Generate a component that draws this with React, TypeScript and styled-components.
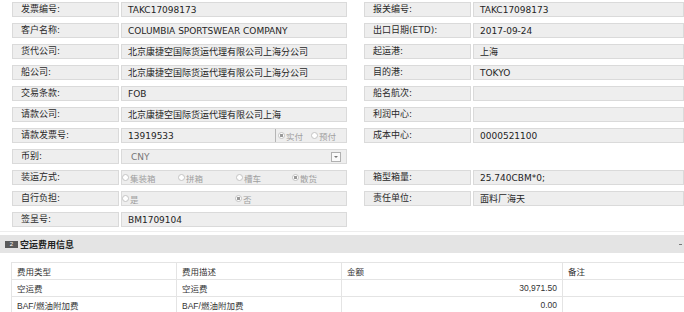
import styled, { createGlobalStyle } from 'styled-components';

const Global = createGlobalStyle`
    body {
        margin: 0;
        background: #fff;
        font-family: "DejaVu Sans", "Noto Sans CJK SC", sans-serif;
    }
`

const Page = styled.div`
    width: 684px;
    height: 312px;
    overflow: hidden;
`

const Form = styled.div`
    display: grid;
    grid-template-columns: 335px 1fr;
    column-gap: 17px;
    row-gap: 6px;
    padding: 2px 0 0 12px;
`

const Field = styled.div`
    display: flex;
    gap: 2px;
    height: 15px;
`

const Label = styled.div`
    flex: none;
    width: 107px;
    box-sizing: border-box;
    background: #eeeeee;
    border: 1px solid #dadada;
    padding-left: 8px;
    font-size: 9px;
    line-height: 13px;
    color: #2a2a2a;
    white-space: nowrap;
`

const Value = styled.div<{ $muted?: boolean }>`
    flex: 1;
    min-width: 0;
    box-sizing: border-box;
    display: flex;
    align-items: center;
    background: #eeeeee;
    border: 1px solid #dadada;
    padding-left: ${p => (p.$muted ? '9px' : '6px')};
    font-size: 9px;
    color: ${p => (p.$muted ? '#777' : '#1e1e1e')};
    white-space: nowrap;
    overflow: hidden;
`

const OptionsValue = styled(Value)`
    padding-left: 0;
`

const Text = styled.span`
    flex: 1;
`

const RadioGroup = styled.div`
    flex: none;
    display: flex;
    align-self: stretch;
    align-items: center;
    width: 68px;
    border-left: 1px solid #b5b5b5;
    padding-left: 2px;
`

const Radio = styled.span<{ $checked?: boolean; $w: number }>`
    display: inline-flex;
    align-items: center;
    gap: 1px;
    width: ${p => p.$w}px;
    flex: none;
    font-family: "Noto Sans CJK SC", sans-serif;
    font-size: 8.5px;
    color: #a0a0a0;
    &::before {
        content: '';
        width: 5px;
        height: 5px;
        border-radius: 50%;
        border: 1px solid #c4c4c4;
        background: ${p => (p.$checked ? 'radial-gradient(circle, #999 0 1.4px, #fff 1.9px)' : '#fff')};
    }
`

const Drop = styled.span`
    margin-left: auto;
    margin-right: 5px;
    width: 8px;
    height: 8px;
    border: 1px solid #b0b0b0;
    background: #fafafa;
    display: flex;
    align-items: center;
    justify-content: center;
    &::after {
        content: '';
        border-left: 2px solid transparent;
        border-right: 2px solid transparent;
        border-top: 2px solid #777;
    }
`

const Divider = styled.div`
    margin-top: 4px;
    height: 1px;
    background: #ededed;
`

const SectionBar = styled.div`
    margin-top: 3px;
    height: 18px;
    background: #e4e4e4;
    display: flex;
    align-items: center;
    padding-left: 5px;
    padding-right: 2px;
`

const Badge = styled.span`
    width: 13px;
    height: 7px;
    background: #5a5a5a;
    color: #fff;
    font-size: 6px;
    line-height: 7px;
    text-align: center;
    font-family: "Liberation Sans", sans-serif;
`

const SectionTitle = styled.span`
    flex: 1;
    margin-left: 2px;
    font-family: "Noto Sans CJK SC", sans-serif;
    font-weight: 700;
    font-size: 9px;
    color: #222;
`

const Collapse = styled.span`
    width: 3px;
    height: 1px;
    background: #777;
`

const Table = styled.table`
    margin: 9px 0 0 11px;
    width: 676px;
    border-collapse: collapse;
    table-layout: fixed;
    font-family: "Liberation Sans", "Noto Sans CJK SC", sans-serif;
    font-size: 8.5px;
    color: #333;
`

const Cell = styled.td<{ $right?: boolean }>`
    height: 16px;
    padding: 0 5px;
    border: 1px solid #e4e4e4;
    text-align: ${p => (p.$right ? 'right' : 'left')};
    white-space: nowrap;
`

type Row = [string, string] | null

const rows: [Row, Row][] = [
    [['发票编号:', 'TAKC17098173'], ['报关编号:', 'TAKC17098173']],
    [['客户名称:', 'COLUMBIA SPORTSWEAR COMPANY'], ['出口日期(ETD):', '2017-09-24']],
    [['货代公司:', '北京康捷空国际货运代理有限公司上海分公司'], ['起运港:', '上海']],
    [['船公司:', '北京康捷空国际货运代理有限公司上海分公司'], ['目的港:', 'TOKYO']],
    [['交易条款:', 'FOB'], ['船名航次:', '']],
    [['请款公司:', '北京康捷空国际货运代理有限公司上海'], ['利润中心:', '']],
]

const fees = [
    ['空运费', '空运费', '30,971.50'],
    ['BAF/燃油附加费', 'BAF/燃油附加费', '0.00'],
]

const Pair = ({ row }: { row: Row }) =>
    row ? (
        <Field>
            <Label>{row[0]}</Label>
            <Value>{row[1]}</Value>
        </Field>
    ) : <div />

export default function App() {
    return (
        <Page>
            <Global />
            <Form>
                {rows.map((r, i) => [<Pair key={i + 'a'} row={r[0]} />, <Pair key={i + 'b'} row={r[1]} />])}

                <Field>
                    <Label>请款发票号:</Label>
                    <Value>
                        <Text>13919533</Text>
                        <RadioGroup>
                            <Radio $w={33} $checked>实付</Radio>
                            <Radio $w={33}>预付</Radio>
                        </RadioGroup>
                    </Value>
                </Field>
                <Pair row={['成本中心:', '0000521100']} />

                <Field>
                    <Label>币别:</Label>
                    <Value $muted>CNY<Drop /></Value>
                </Field>
                <div />

                <Field>
                    <Label>装运方式:</Label>
                    <OptionsValue>
                        <Radio $w={56}>集装箱</Radio>
                        <Radio $w={58}>拼箱</Radio>
                        <Radio $w={56}>槽车</Radio>
                        <Radio $w={56} $checked>散货</Radio>
                    </OptionsValue>
                </Field>
                <Pair row={['箱型箱量:', '25.740CBM*0;']} />

                <Field>
                    <Label>自行负担:</Label>
                    <OptionsValue>
                        <Radio $w={113}>是</Radio>
                        <Radio $w={56} $checked>否</Radio>
                    </OptionsValue>
                </Field>
                <Pair row={['责任单位:', '面料厂海天']} />

                <Pair row={['签呈号:', 'BM1709104']} />
                <div />
            </Form>

            <Divider />
            <SectionBar>
                <Badge>2</Badge>
                <SectionTitle>空运费用信息</SectionTitle>
                <Collapse />
            </SectionBar>

            <Table>
                <colgroup>
                    <col style={{ width: 165 }} />
                    <col style={{ width: 165 }} />
                    <col style={{ width: 221 }} />
                    <col />
                </colgroup>
                <tbody>
                    <tr>
                        <Cell>费用类型</Cell>
                        <Cell>费用描述</Cell>
                        <Cell>金额</Cell>
                        <Cell>备注</Cell>
                    </tr>
                    {fees.map(f => (
                        <tr key={f[0]}>
                            <Cell>{f[0]}</Cell>
                            <Cell>{f[1]}</Cell>
                            <Cell $right>{f[2]}</Cell>
                            <Cell></Cell>
                        </tr>
                    ))}
                </tbody>
            </Table>
        </Page>
    )
}
